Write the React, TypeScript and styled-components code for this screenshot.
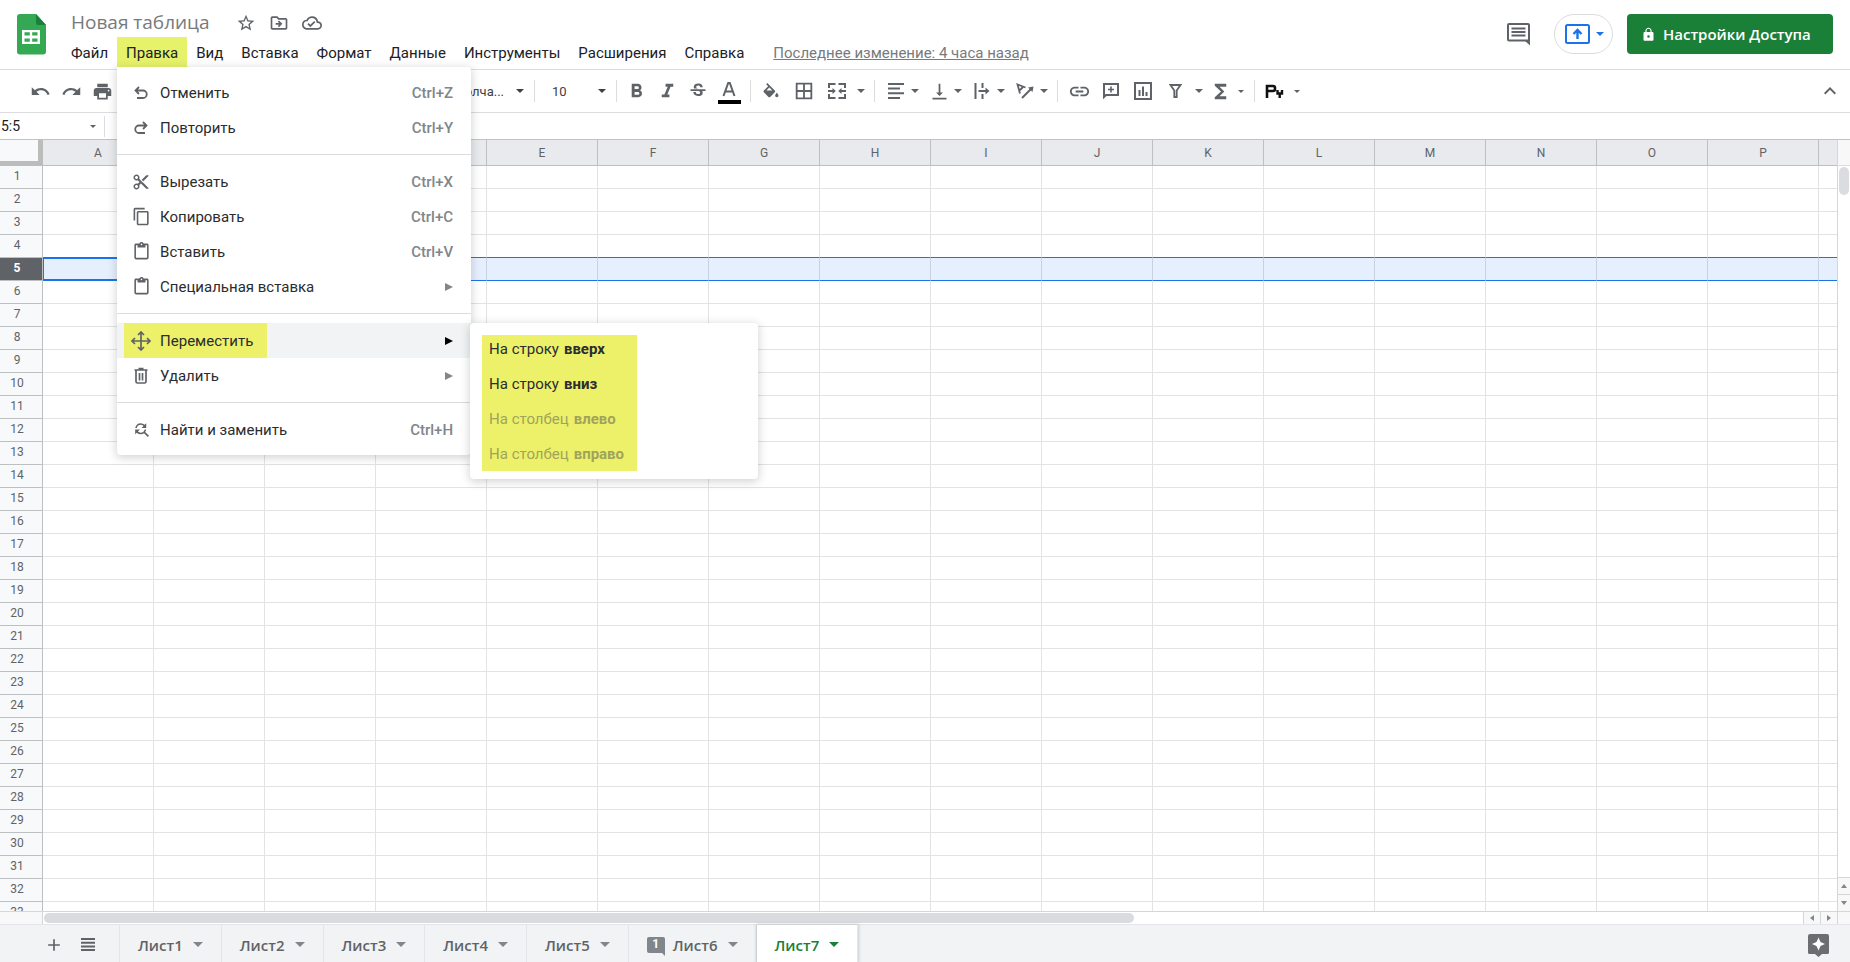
import React from 'react';
import styled, { createGlobalStyle, css } from 'styled-components';
import {
  MdAdd,
  MdBorderAll,
  MdContentCopy,
  MdContentCut,
  MdContentPaste,
  MdFindReplace,
  MdFormatBold,
  MdFormatItalic,
  MdFunctions,
  MdKeyboardArrowUp,
  MdLink,
  MdLock,
  MdOutlineCloudDone,
  MdOutlineDriveFileMove,
  MdPrint,
  MdRedo,
  MdStarBorder,
  MdStrikethroughS,
  MdUndo,
  MdVerticalAlignBottom,
} from 'react-icons/md';

const ROBOTO = "Roboto, 'Liberation Sans', sans-serif";
const BRAND = "'Open Sans', 'Noto Sans', sans-serif";
const GREY = '#5f6368';
const LINE = '#dadce0';
const MARK = '#edf169';

const GlobalStyle = createGlobalStyle`
  *, *::before, *::after { box-sizing: border-box; }
  body { margin: 0; background: #fff; font-family: ${ROBOTO}; color: #202124; }
  button, input, select { font: inherit; color: inherit; border: 0; padding: 0; margin: 0; background: none; }
  svg { display: block; flex: none; }
`;

const Page = styled.div`
  display: flex;
  flex-direction: column;
  height: 100vh;
  overflow: hidden;
`;

/* ---------- header ---------- */

const Header = styled.header`
  display: flex;
  align-items: flex-start;
  height: 70px;
  padding: 0 17px;
  border-bottom: 1px solid ${LINE};
`;

const LogoLink = styled.a`
  margin: 14px 16px 0 0;
`;

const TitleArea = styled.div`
  display: flex;
  flex-direction: column;
  padding-top: 8px;
`;

const TitleRow = styled.div`
  display: flex;
  align-items: center;
  gap: 13px;
  height: 29px;
  padding-left: 9px;
`;

const Title = styled.h1`
  margin: 0 13px 0 0;
  font: 400 19px/29px ${BRAND};
  color: #777a7d;
`;

const PlainButton = styled.button`
  display: flex;
  align-items: center;
  justify-content: center;
  color: ${GREY};
`;

const MenuBar = styled.nav`
  display: flex;
  align-items: stretch;
  height: 30px;
`;

const MenuBarItem = styled.div`
  position: relative;
`;

const MenuButton = styled.button<{ $open?: boolean }>`
  height: 30px;
  padding: 2px 9px 0;
  font-size: 15px;
  line-height: 28px;
  background: ${(p) => (p.$open ? '#e6f26a' : 'transparent')};
`;

const LastEdit = styled.a`
  margin-left: 20px;
  padding-top: 2px;
  font-size: 15px;
  line-height: 28px;
  color: #777a7d;
  text-decoration: underline;
`;

const HeaderActions = styled.div`
  display: flex;
  align-items: center;
  margin: 14px 0 0 auto;
  height: 40px;
`;

const PresentButton = styled.button`
  display: flex;
  align-items: center;
  justify-content: center;
  gap: 6px;
  width: 59px;
  height: 40px;
  margin: 0 14px 0 24px;
  padding-left: 2px;
  border: 1px solid ${LINE};
  border-radius: 20px;
  color: #1a73e8;
`;

const ShareButton = styled.button`
  display: flex;
  align-items: center;
  gap: 7px;
  width: 206px;
  height: 40px;
  padding: 0 14px;
  border-radius: 4px;
  background: #1a8038;
  color: #fff;
  font: 600 15px/38px ${BRAND};
`;

/* ---------- drop-down menus ---------- */

const menuPanel = css`
  position: absolute;
  background: #fff;
  border-radius: 4px;
  box-shadow: 0 2px 8px 1px rgba(60, 64, 67, 0.22);
`;

const Dropdown = styled.div`
  ${menuPanel}
  top: 30px;
  left: 0;
  z-index: 2;
  width: 354px;
  padding: 8px 0;
  border-top-left-radius: 0;
`;

const MenuGroup = styled.div`
  & + & {
    margin-top: 9px;
    padding-top: 9px;
    border-top: 1px solid ${LINE};
  }
`;

const MenuRow = styled.button<{ $active?: boolean }>`
  display: flex;
  align-items: center;
  width: 100%;
  height: 35px;
  padding: 0 18px 0 7px;
  font-size: 15px;
  text-align: left;
  color: #2a2c2f;
  background: ${(p) => (p.$active ? '#f1f3f4' : 'transparent')};
`;

const RowLabel = styled.span<{ $marked?: boolean }>`
  display: flex;
  align-items: center;
  height: 35px;
  padding-right: 14px;
  background: ${(p) => (p.$marked ? MARK : 'transparent')};
`;

const RowIcon = styled.span`
  display: flex;
  justify-content: center;
  width: 34px;
  margin-right: 2px;
  color: ${GREY};
`;

const Shortcut = styled.span`
  margin-left: auto;
  font-weight: 500;
  color: #80868b;
`;

const SubArrow = styled.span<{ $active?: boolean }>`
  margin-left: auto;
  border: solid transparent;
  border-width: 4px 0 4px 8px;
  border-left-color: ${(p) => (p.$active ? '#000' : '#80868b')};
`;

const Submenu = styled.div`
  ${menuPanel}
  top: 256px;
  left: 353px;
  width: 288px;
  padding: 12px 12px 8px;
`;

const SubmenuList = styled.div`
  display: flex;
  flex-direction: column;
  gap: 7px;
  width: 155px;
  padding-bottom: 3px;
  background: ${MARK};
`;

const SubmenuRow = styled.button`
  display: flex;
  align-items: center;
  gap: 5px;
  height: 28px;
  padding: 0 7px;
  font-size: 15px;
  white-space: nowrap;
  color: #2a2c2f;

  &:disabled {
    color: #a0a35c;
  }
`;

/* ---------- toolbar ---------- */

const Toolbar = styled.div`
  display: flex;
  align-items: center;
  height: 43px;
  padding: 0 8px 0 25px;
  border-bottom: 1px solid ${LINE};
  color: ${GREY};
`;

const ToolGroup = styled.div`
  display: flex;
  align-items: center;
  gap: 1px;

  & + & {
    margin-left: 6px;
    padding-left: 4px;
    border-left: 1px solid ${LINE};
    height: 22px;
  }
`;

const ToolButton = styled.button<{ $width?: number }>`
  display: flex;
  align-items: center;
  justify-content: center;
  width: ${(p) => p.$width ?? 30}px;
  height: 28px;
  color: ${GREY};
`;

const Caret = styled.span<{ $small?: boolean }>`
  border: solid transparent;
  border-width: ${(p) => (p.$small ? '3px 3px 0' : '4px 4px 0')};
  border-top-color: currentColor;
`;

const Picker = styled.label<{ $width: number }>`
  display: flex;
  align-items: center;
  width: ${(p) => p.$width}px;
  padding-right: 4px;
  font-size: 13px;
  color: #3c4043;
`;

const FontSelect = styled.select`
  flex: 1;
  min-width: 0;
  margin-right: 12px;
  appearance: none;
  text-align: right;
  text-align-last: right;
`;

const SizeInput = styled.input`
  flex: 1;
  min-width: 0;
  padding-left: 13px;
`;

const TextColor = styled.span`
  display: flex;
  flex-direction: column;
  align-items: center;
  width: 23px;
  margin-top: 4px;
  border-bottom: 4px solid #000;
`;

const CollapseButton = styled(PlainButton)`
  margin-left: auto;
`;

/* ---------- formula bar ---------- */

const FormulaBar = styled.div`
  display: flex;
  align-items: center;
  height: 27px;
  border-bottom: 1px solid #c0c2c4;
`;

const NameBox = styled.label`
  display: flex;
  align-items: center;
  width: 105px;
  height: 21px;
  padding: 0 8px 0 1px;
  border-right: 1px solid ${LINE};
  color: ${GREY};
`;

const NameInput = styled.input`
  flex: 1;
  min-width: 0;
  font-size: 14px;
  color: #202124;
`;

const FormulaInput = styled.input`
  flex: 1;
  padding: 0 12px;
  font-size: 14px;
`;

/* ---------- sheet ---------- */

const Sheet = styled.main`
  flex: 1;
  min-height: 0;
  display: grid;
  grid-template: minmax(0, 1fr) 13px / minmax(0, 1fr) 13px;
`;

const Viewport = styled.div`
  overflow: hidden;
`;

const Grid = styled.table`
  width: 100%;
  table-layout: fixed;
  border-collapse: separate;
  border-spacing: 0;
  font-size: 12px;
`;

const Corner = styled.td`
  width: 43px;
  height: 26px;
  padding: 0;
  background: #f8f9fa;
  border: solid #bcbcbc;
  border-width: 0 5px 5px 0;
`;

const ColumnHead = styled.th<{ $rest?: boolean }>`
  width: ${(p) => (p.$rest ? 'auto' : '111px')};
  height: 26px;
  padding: 0;
  font-weight: 400;
  color: ${GREY};
  background: #e8eaed;
  border: solid #bdc0c1;
  border-width: ${(p) => (p.$rest ? '0 0 1px' : '0 1px 1px 0')};
`;

const RowHead = styled.th<{ $selected: boolean }>`
  height: 23px;
  padding: 0 8px 2px 0;
  line-height: 20px;
  font-weight: ${(p) => (p.$selected ? 700 : 400)};
  color: ${(p) => (p.$selected ? '#fff' : GREY)};
  background: ${(p) => (p.$selected ? GREY : '#f8f9fa')};
  border: solid #bdc0c1;
  border-width: 0 1px 1px 0;
`;

const Cell = styled.td<{ $selected: boolean; $beforeSelected: boolean; $current?: boolean; $rest?: boolean }>`
  padding: 0;
  background: ${(p) => (p.$selected ? '#e6effd' : '#fff')};
  border: solid #e2e3e3;
  border-width: ${(p) => (p.$rest ? '0 0 1px' : '0 1px 1px 0')};
  ${(p) => (p.$selected || p.$beforeSelected) && 'border-bottom-color: #1a73e8;'}
  ${(p) => p.$selected && 'border-right-color: #c8d2e2;'}
  ${(p) => p.$current && 'box-shadow: inset 1px 1px #1a73e8, inset 0 -1px #1a73e8;'}
`;

const VBar = styled.div`
  display: flex;
  flex-direction: column;
  border-left: 1px solid #d5d6d7;
`;

const VBarTop = styled.div`
  height: 26px;
  background: #f8f8f8;
  border-bottom: 1px solid ${LINE};
`;

const VThumb = styled.div`
  width: 10px;
  height: 28px;
  margin: 1px;
  border-radius: 5px;
  background: #dadce0;
`;

const HBar = styled.div`
  display: flex;
  border-top: 1px solid #d5d6d7;
`;

const HBarStart = styled.div`
  width: 43px;
  background: #f8f8f8;
  border-right: 1px solid #d5d6d7;
`;

const HTrack = styled.div`
  flex: 1;
  padding: 1px;
`;

const HThumb = styled.div`
  width: 62%;
  height: 10px;
  border-radius: 5px;
  background: #dadbdf;
`;

const ScrollButton = styled.button<{ $vertical?: boolean }>`
  display: flex;
  align-items: center;
  justify-content: center;
  background: #f8f8f8;
  color: #80868b;
  ${(p) =>
    p.$vertical
      ? 'height: 17px; border-top: 1px solid #d5d6d7;'
      : 'width: 17px; border-left: 1px solid #d5d6d7;'}
`;

const Spacer = styled.div`
  flex: 1;
`;

const BarCorner = styled.div`
  background: #f8f8f8;
  border: solid #d5d6d7;
  border-width: 1px 0 0 1px;
`;

/* ---------- sheet tabs ---------- */

const Tabs = styled.footer`
  display: flex;
  height: 38px;
  padding: 0 21px 0 37px;
  background: #f1f3f4;
  border-top: 1px solid #e3e5e8;
`;

const TabTools = styled.div`
  display: flex;
  align-items: center;
  width: 83px;
  padding-top: 2px;
  border-right: 1px solid #e3e5e8;
`;

const TabTool = styled(PlainButton)`
  width: 34px;
  height: 34px;
`;

const Tab = styled.button<{ $active: boolean }>`
  display: flex;
  align-items: center;
  padding: 2px 18px 0;
  font: 600 15px/34px ${BRAND};
  color: ${(p) => (p.$active ? '#188038' : GREY)};
  background: ${(p) => (p.$active ? '#fff' : 'transparent')};
  border-right: 1px solid #e3e5e8;
  box-shadow: ${(p) => (p.$active ? '0 0 3px 1px rgba(60, 64, 67, 0.2)' : 'none')};
`;

const TabCaret = styled.span<{ $active: boolean }>`
  margin-left: 10px;
  border: solid transparent;
  border-width: 5px 5px 0;
  border-top-color: ${(p) => (p.$active ? '#188038' : '#80868b')};
`;

const CommentBadge = styled.span`
  position: relative;
  width: 18px;
  height: 16px;
  margin-right: 8px;
  border-radius: 2px 2px 0 2px;
  background: #80868b;
  color: #fff;
  font: 700 12px/15px ${ROBOTO};
  text-align: center;

  &::after {
    content: '';
    position: absolute;
    right: 0;
    top: 15px;
    border: solid transparent;
    border-width: 0 4px 4px 0;
    border-right-color: #80868b;
  }
`;

const ExploreButton = styled(PlainButton)`
  margin-left: auto;
  padding-top: 4px;
`;

/* ---------- drawings ---------- */

const Logo = () => (
  <svg width="29" height="41" viewBox="0 0 29 41">
    <path d="M3 0h16l10 11v26.500a3 3 0 0 1-3 3H3a3 3 0 0 1-3-3V3a3 3 0 0 1 3-3z" fill="#34a853" />
    <path d="M19 0l10 11H21a2 2 0 0 1-2-2z" fill="#188038" />
    <path d="M5 16h18v14H5zM7.500 18.200v3.200h5.300v-3.200zM15.200 18.200v3.200h5.300v-3.200zM7.500 24.500v3.200h5.300v-3.200zM15.200 24.500v3.200h5.300v-3.200z" fill="#fff" fillRule="evenodd" />
  </svg>
);

const CommentIcon = () => (
  <svg width="23" height="23" viewBox="0 0 23 23" fill="none" stroke={GREY}>
    <path d="M2 1h19a1 1 0 0 1 1 1v15.500H2a1 1 0 0 1-1-1V2a1 1 0 0 1 1-1z" strokeWidth="2" />
    <path d="M17 17h6v5.500z" fill={GREY} stroke="none" />
    <path d="M4.500 5.500h14M4.500 9h14M4.500 12.500h14" strokeWidth="2" />
  </svg>
);

const PresentIcon = () => (
  <svg width="25" height="20" viewBox="0 0 25 20" fill="none" stroke="currentColor" strokeWidth="2">
    <rect x="1" y="1" width="23" height="18" rx="1.500" />
    <path d="M12.500 15V6.500M8.500 10l4-4 4 4" strokeWidth="2.400" />
  </svg>
);

const TurnIcon = ({ mirrored }: { mirrored?: boolean }) => (
  <svg width="16" height="16" viewBox="0 0 16 16" fill="none" stroke="currentColor" strokeWidth="1.800">
    <g transform={mirrored ? 'matrix(-1 0 0 1 16 0)' : undefined}>
      <path d="M6 2L2.500 5.500 6 9M3 5.500h7a3.500 3.500 0 0 1 0 7.500H4" />
    </g>
  </svg>
);

const MoveIcon = () => (
  <svg width="20" height="20" viewBox="0 0 20 20" fill="none" stroke="currentColor" strokeWidth="1.700">
    <path d="M10 1.500v17M1.500 10h17M7 4l3-3 3 3M7 16l3 3 3-3M4 7l-3 3 3 3M16 7l3 3-3 3" />
  </svg>
);

const TrashIcon = () => (
  <svg width="16" height="18" viewBox="0 0 16 18" fill="none" stroke="currentColor" strokeWidth="1.700">
    <path d="M1.500 3h13M5.500 1.500h5M3 3v11.500A1.500 1.500 0 0 0 4.500 16h7a1.500 1.500 0 0 0 1.500-1.500V3M6.500 6v7.500M9.500 6v7.500" />
  </svg>
);

const FillIcon = () => (
  <svg width="20" height="16" viewBox="0 0 24 19" fill="currentColor">
    <path d="M16.560 8.940L7.620 0 6.210 1.410l2.380 2.380-5.150 5.150c-.59.59-.59 1.540 0 2.120l5.500 5.500c.29.29.68.44 1.060.44s.77-.15 1.060-.44l5.500-5.500c.59-.58.59-1.530 0-2.120zM6.500 9L10 5.400 13.500 9zM19 11.500s-2 2.170-2 3.500c0 1.100.9 2 2 2s2-.9 2-2c0-1.330-2-3.500-2-3.500z" />
  </svg>
);

const AlignLeftIcon = () => (
  <svg width="16" height="16" viewBox="0 0 16 16" stroke="currentColor" strokeWidth="2">
    <path d="M0 1h16M0 5.500h12M0 10.300h16M0 15h12" />
  </svg>
);

const MergeIcon = () => (
  <svg width="18" height="16" viewBox="0 0 18 16" fill="none" stroke="currentColor" strokeWidth="2">
    <path d="M7.500 1H1v4M10.500 1H17v4M7.500 15H1v-4M10.500 15H17v-4" />
    <path d="M0 8h5M18 8h-5" />
    <path d="M4.500 5l3.300 3-3.300 3zM13.500 5l-3.300 3 3.300 3z" fill="currentColor" stroke="none" />
  </svg>
);

const OverflowIcon = () => (
  <svg width="16" height="16" viewBox="0 0 16 16" fill="none" stroke="currentColor" strokeWidth="2">
    <path d="M1.500 0v16M8.500 0v5M8.500 11v5M4.500 8h8" />
    <path d="M11.500 4.500L15.500 8l-4 3.500z" fill="currentColor" stroke="none" />
  </svg>
);

const RotateIcon = () => (
  <svg width="18" height="16" viewBox="0 0 18 16" fill="none" stroke="currentColor" strokeWidth="1.800">
    <path d="M9.500 4.500L1.500 1.500 4 10.500M7.500 3.500L3 8" />
    <path d="M6 15L15 6" strokeWidth="2" />
    <path d="M17.500 3.500l-1 5.500-4.500-4.500z" fill="currentColor" stroke="none" />
  </svg>
);

const AddCommentIcon = () => (
  <svg width="16" height="16" viewBox="0 0 16 16" fill="none" stroke="currentColor">
    <path d="M1 14V1h14v11H3z" strokeWidth="2" />
    <path d="M8 3.500v6M5 6.500h6" strokeWidth="1.600" />
  </svg>
);

const ChartIcon = () => (
  <svg width="18" height="18" viewBox="0 0 18 18" fill="none" stroke="currentColor" strokeWidth="2">
    <rect x="1" y="1" width="16" height="16" />
    <path d="M5.500 14V8M9 14V4.500M12.500 14v-4" />
  </svg>
);

const FilterIcon = () => (
  <svg width="13" height="14" viewBox="0 0 13 14" fill="none" stroke="currentColor" strokeWidth="1.800">
    <path d="M1.500 1h10L7.700 6.500V13H5.300V6.500z" />
  </svg>
);

const LinesIcon = () => (
  <svg width="14" height="14" viewBox="0 0 14 14" stroke={GREY} strokeWidth="2">
    <path d="M0 1h14M0 4.700h14M0 8.400h14M0 12.100h14" />
  </svg>
);

const PyIcon = () => (
  <svg width="19" height="14" viewBox="0 0 19 14" fill="none" stroke="#111">
    <path d="M2 14V2h6a2 2 0 0 1 2 2v1a2 2 0 0 1-2 2H2" strokeWidth="2.600" />
    <path d="M12.500 6v3.500h4.500V6M14.700 9v5" strokeWidth="2.400" />
  </svg>
);

const ExploreIcon = () => (
  <svg width="21" height="23" viewBox="0 0 21 23">
    <path d="M2 0h17a2 2 0 0 1 2 2v16.500a1.500 1.500 0 0 1-1.500 1.500H14l-3.500 3L7 20H1.500A1.500 1.500 0 0 1 0 18.500V2a2 2 0 0 1 2-2z" fill="#6b6d70" />
    <path d="M10.500 3.500l2 4.500 4.500 2-4.500 2-2 4.500-2-4.500L4 10l4.500-2z" fill="#fff" />
  </svg>
);

/* ---------- page ---------- */

type MenuItem = { label: string; icon: React.ReactNode; keys?: string; active?: boolean };

const editMenu: MenuItem[][] = [
  [
    { label: 'Отменить', icon: <TurnIcon />, keys: 'Ctrl+Z' },
    { label: 'Повторить', icon: <TurnIcon mirrored />, keys: 'Ctrl+Y' },
  ],
  [
    { label: 'Вырезать', icon: <MdContentCut size={18} />, keys: 'Ctrl+X' },
    { label: 'Копировать', icon: <MdContentCopy size={19} />, keys: 'Ctrl+C' },
    { label: 'Вставить', icon: <MdContentPaste size={19} />, keys: 'Ctrl+V' },
    { label: 'Специальная вставка', icon: <MdContentPaste size={19} /> },
  ],
  [
    { label: 'Переместить', icon: <MoveIcon />, active: true },
    { label: 'Удалить', icon: <TrashIcon /> },
  ],
  [{ label: 'Найти и заменить', icon: <MdFindReplace size={19} />, keys: 'Ctrl+H' }],
];

const moveMenu = [
  { text: 'На строку', target: 'вверх', disabled: false },
  { text: 'На строку', target: 'вниз', disabled: false },
  { text: 'На столбец', target: 'влево', disabled: true },
  { text: 'На столбец', target: 'вправо', disabled: true },
];

const menus = ['Файл', 'Правка', 'Вид', 'Вставка', 'Формат', 'Данные', 'Инструменты', 'Расширения', 'Справка'];
const columns = 'ABCDEFGHIJKLMNOP'.split('');
const rows = Array.from({ length: 33 }, (_, i) => i + 1);
const sheets = [1, 2, 3, 4, 5, 6, 7];
const selectedRow = 5;

const EditMenu = () => (
  <Dropdown role="menu">
    {editMenu.map((group, g) => (
      <MenuGroup key={g}>
        {group.map((item) => (
          <MenuRow key={item.label} role="menuitem" $active={item.active}>
            <RowLabel $marked={item.active}>
              <RowIcon>{item.icon}</RowIcon>
              {item.label}
            </RowLabel>
            {item.keys ? <Shortcut>{item.keys}</Shortcut> : <SubArrow $active={item.active} />}
          </MenuRow>
        ))}
      </MenuGroup>
    ))}
    <Submenu role="menu">
      <SubmenuList>
        {moveMenu.map((m) => (
          <SubmenuRow key={m.target} role="menuitem" disabled={m.disabled}>
            {m.text} <b>{m.target}</b>
          </SubmenuRow>
        ))}
      </SubmenuList>
    </Submenu>
  </Dropdown>
);

const SplitTool = ({ label, small, children }: { label: string; small?: boolean; children: React.ReactNode }) => (
  <>
    <ToolButton $width={24} aria-label={label}>
      {children}
    </ToolButton>
    <ToolButton $width={14} aria-label={`${label}: параметры`}>
      <Caret $small={small} />
    </ToolButton>
  </>
);

const SplitGroup = styled(ToolGroup)`
  gap: 0;

  & > button:nth-child(2n + 1) {
    margin-left: 5px;
  }
`;

const InsertGroup = styled(ToolGroup)`
  gap: 2px;

  & > button:first-child {
    margin-left: 2px;
  }
`;

export default function App() {
  return (
    <Page>
      <GlobalStyle />
      <Header>
        <LogoLink href="#" aria-label="Таблицы">
          <Logo />
        </LogoLink>
        <TitleArea>
          <TitleRow>
            <Title>Новая таблица</Title>
            <PlainButton aria-label="Добавить в помеченные">
              <MdStarBorder size={20} />
            </PlainButton>
            <PlainButton aria-label="Переместить файл">
              <MdOutlineDriveFileMove size={20} />
            </PlainButton>
            <PlainButton aria-label="Состояние документа">
              <MdOutlineCloudDone size={20} />
            </PlainButton>
          </TitleRow>
          <MenuBar>
            {menus.map((name) => (
              <MenuBarItem key={name}>
                <MenuButton $open={name === 'Правка'}>{name}</MenuButton>
                {name === 'Правка' && <EditMenu />}
              </MenuBarItem>
            ))}
            <LastEdit href="#">Последнее изменение: 4 часа назад</LastEdit>
          </MenuBar>
        </TitleArea>
        <HeaderActions>
          <PlainButton aria-label="История комментариев">
            <CommentIcon />
          </PlainButton>
          <PresentButton aria-label="Начать презентацию">
            <PresentIcon />
            <Caret />
          </PresentButton>
          <ShareButton>
            <MdLock size={15} />
            Настройки Доступа
          </ShareButton>
        </HeaderActions>
      </Header>

      <Toolbar role="toolbar">
        <ToolGroup>
          <ToolButton aria-label="Отменить">
            <MdUndo size={21} />
          </ToolButton>
          <ToolButton aria-label="Повторить">
            <MdRedo size={21} />
          </ToolButton>
          <ToolButton aria-label="Печать">
            <MdPrint size={21} />
          </ToolButton>
          <Picker $width={410}>
            <FontSelect aria-label="Шрифт">
              <option>По умолча...</option>
            </FontSelect>
            <Caret />
          </Picker>
        </ToolGroup>
        <ToolGroup>
          <Picker $width={71}>
            <SizeInput aria-label="Размер шрифта" defaultValue="10" />
            <Caret />
          </Picker>
        </ToolGroup>
        <ToolGroup>
          <ToolButton aria-label="Полужирный">
            <MdFormatBold size={23} />
          </ToolButton>
          <ToolButton aria-label="Курсив">
            <MdFormatItalic size={23} />
          </ToolButton>
          <ToolButton aria-label="Зачеркнутый">
            <MdStrikethroughS size={20} />
          </ToolButton>
          <ToolButton aria-label="Цвет текста">
            <TextColor>
              <svg width="14" height="18" viewBox="0 0 14 18" fill="none" stroke="currentColor" strokeWidth="2">
                <path d="M1.500 14L6.200 1h1.600l4.700 13M3.500 9.500h7" />
              </svg>
            </TextColor>
          </ToolButton>
        </ToolGroup>
        <ToolGroup>
          <ToolButton $width={32} aria-label="Цвет заливки">
            <FillIcon />
          </ToolButton>
          <ToolButton $width={32} aria-label="Границы">
            <MdBorderAll size={22} />
          </ToolButton>
          <ToolButton $width={32} aria-label="Объединить ячейки">
            <MergeIcon />
          </ToolButton>
          <ToolButton $width={14} aria-label="Тип объединения">
            <Caret />
          </ToolButton>
        </ToolGroup>
        <SplitGroup>
          <SplitTool label="По горизонтали">
            <AlignLeftIcon />
          </SplitTool>
          <SplitTool label="По вертикали">
            <MdVerticalAlignBottom size={21} />
          </SplitTool>
          <SplitTool label="Перенос текста">
            <OverflowIcon />
          </SplitTool>
          <SplitTool label="Поворот текста">
            <RotateIcon />
          </SplitTool>
        </SplitGroup>
        <InsertGroup>
          <ToolButton aria-label="Вставить ссылку">
            <MdLink size={23} />
          </ToolButton>
          <ToolButton aria-label="Вставить комментарий">
            <AddCommentIcon />
          </ToolButton>
          <ToolButton aria-label="Вставить диаграмму">
            <ChartIcon />
          </ToolButton>
          <ToolButton aria-label="Создать фильтр">
            <FilterIcon />
          </ToolButton>
          <ToolButton $width={14} aria-label="Фильтры">
            <Caret />
          </ToolButton>
          <SplitTool label="Функции" small>
            <MdFunctions size={23} />
          </SplitTool>
        </InsertGroup>
        <ToolGroup>
          <ToolButton aria-label="Способ ввода">
            <PyIcon />
          </ToolButton>
          <ToolButton $width={14} aria-label="Выбор способа ввода">
            <Caret $small />
          </ToolButton>
        </ToolGroup>
        <CollapseButton aria-label="Скрыть меню">
          <MdKeyboardArrowUp size={24} />
        </CollapseButton>
      </Toolbar>

      <FormulaBar>
        <NameBox>
          <NameInput aria-label="Диапазон" defaultValue="5:5" />
          <Caret $small />
        </NameBox>
        <FormulaInput aria-label="Формула" />
      </FormulaBar>

      <Sheet>
        <Viewport>
          <Grid>
            <thead>
              <tr>
                <Corner />
                {columns.map((c) => (
                  <ColumnHead key={c} scope="col">
                    {c}
                  </ColumnHead>
                ))}
                <ColumnHead $rest />
              </tr>
            </thead>
            <tbody>
              {rows.map((r) => {
                const state = { $selected: r === selectedRow, $beforeSelected: r === selectedRow - 1 };
                return (
                  <tr key={r}>
                    <RowHead scope="row" $selected={state.$selected}>
                      {r}
                    </RowHead>
                    {columns.map((c) => (
                      <Cell key={c} {...state} $current={state.$selected && c === 'A'} />
                    ))}
                    <Cell {...state} $rest />
                  </tr>
                );
              })}
            </tbody>
          </Grid>
        </Viewport>
        <VBar>
          <VBarTop />
          <VThumb />
          <Spacer />
          <ScrollButton $vertical aria-label="Вверх">
            <svg width="6" height="4" viewBox="0 0 6 4"><path d="M0 4l3-4 3 4z" fill="currentColor" /></svg>
          </ScrollButton>
          <ScrollButton $vertical aria-label="Вниз">
            <svg width="6" height="4" viewBox="0 0 6 4"><path d="M0 0l3 4 3-4z" fill="currentColor" /></svg>
          </ScrollButton>
        </VBar>
        <HBar>
          <HBarStart />
          <HTrack>
            <HThumb />
          </HTrack>
          <ScrollButton aria-label="Влево">
            <svg width="4" height="6" viewBox="0 0 4 6"><path d="M4 0L0 3l4 3z" fill="currentColor" /></svg>
          </ScrollButton>
          <ScrollButton aria-label="Вправо">
            <svg width="4" height="6" viewBox="0 0 4 6"><path d="M0 0l4 3-4 3z" fill="currentColor" /></svg>
          </ScrollButton>
        </HBar>
        <BarCorner />
      </Sheet>

      <Tabs>
        <TabTools>
          <TabTool aria-label="Добавить лист">
            <MdAdd size={20} />
          </TabTool>
          <TabTool aria-label="Все листы">
            <LinesIcon />
          </TabTool>
        </TabTools>
        {sheets.map((n) => (
          <Tab key={n} $active={n === 7}>
            {n === 6 && <CommentBadge>1</CommentBadge>}
            Лист{n}
            <TabCaret $active={n === 7} />
          </Tab>
        ))}
        <ExploreButton aria-label="Анализ данных">
          <ExploreIcon />
        </ExploreButton>
      </Tabs>
    </Page>
  );
}
